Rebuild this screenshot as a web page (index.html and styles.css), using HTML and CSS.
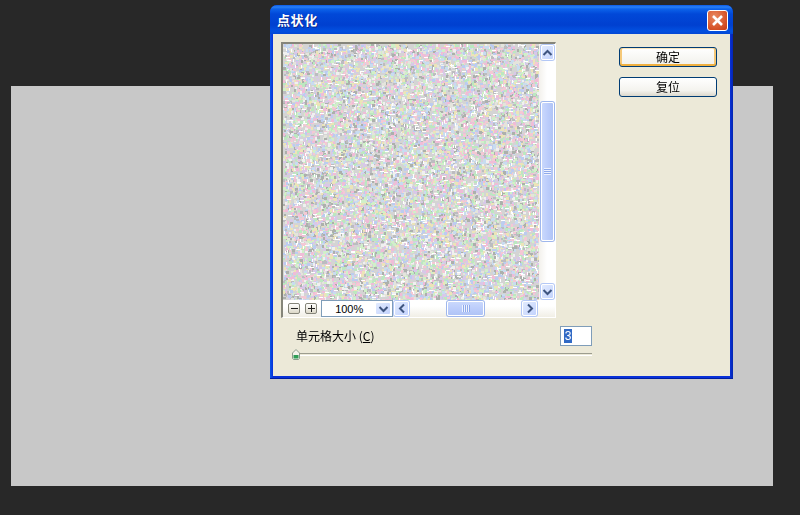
FILE: index.html
```html
<!DOCTYPE html>
<html lang="zh-CN">
<head>
    <meta charset="UTF-8">
    <title>点状化</title>
    <link rel="stylesheet" href="styles.css">
</head>
<body>

    <div class="workspace">
        <div class="doc-canvas"></div>
    </div>

    <div class="dialog">
        <div class="titlebar">
            <span class="title-text">点状化</span>
            <button class="close-btn">
                <svg width="13" height="13" viewBox="0 0 13 13"><path d="M2 2l9 9M11 2l-9 9" stroke="#fff" stroke-width="2.6" fill="none"/></svg>
            </button>
        </div>

        <div class="client">
            <div class="left-col">
                <div class="preview-frame">
                    <canvas id="noise" width="256" height="256"></canvas>

                    <div class="vbar">
                        <div class="sb-btn vbtn">
                            <svg width="11" height="8" viewBox="0 0 11 8"><path d="M1.500 6l4-4 4 4" class="chev"/></svg>
                        </div>
                        <div class="vthumb">
                            <div class="grip-h"></div>
                        </div>
                        <div class="sb-btn vbtn vbtn-down">
                            <svg width="11" height="8" viewBox="0 0 11 8"><path d="M1.500 2l4 4 4-4" class="chev"/></svg>
                        </div>
                    </div>

                    <div class="preview-tools">
                        <div class="zoom-btn">
                            <svg width="7" height="7" viewBox="0 0 7 7"><path d="M0 3.500h7" class="sign"/></svg>
                        </div>
                        <div class="zoom-btn">
                            <svg width="7" height="7" viewBox="0 0 7 7"><path d="M0 3.500h7M3.500 0v7" class="sign"/></svg>
                        </div>
                        <div class="zoom-select">
                            <span class="zoom-value">100%</span>
                            <div class="sb-btn drop-btn">
                                <svg width="11" height="8" viewBox="0 0 11 8"><path d="M1.500 2l4 4 4-4" class="chev"/></svg>
                            </div>
                        </div>
                        <div class="hbar">
                            <div class="sb-btn hbtn">
                                <svg width="8" height="11" viewBox="0 0 8 11"><path d="M6 1.500l-4 4 4 4" class="chev"/></svg>
                            </div>
                            <div class="hthumb">
                                <div class="grip-v"></div>
                            </div>
                            <div class="sb-btn hbtn">
                                <svg width="8" height="11" viewBox="0 0 8 11"><path d="M2 1.500l4 4-4 4" class="chev"/></svg>
                            </div>
                        </div>
                    </div>
                </div>

                <div class="param-row">
                    <span class="param-label">单元格大小 (<u>C</u>)</span>
                    <div class="param-input"><span class="selected">3</span></div>
                </div>
                <div class="slider">
                    <svg class="slider-thumb" width="8" height="11" viewBox="0 0 8 11">
                        <path d="M4 .5L7.500 4v5.500l-1 1h-5l-1-1V4z" fill="#f4f3ec" stroke="#8b9a8c"/>
                        <path d="M1.500 6h5v3.500h-5z" fill="#2f9e57"/>
                    </svg>
                </div>
            </div>

            <div class="right-col">
                <button class="xp-btn default">确定</button>
                <button class="xp-btn">复位</button>
            </div>
        </div>
    </div>

    <script src="noise.js"></script>
</body>
</html>
```

FILE: styles.css
```css
/* Basic reset */
* {
    box-sizing: border-box;
    margin: 0;
    padding: 0;
}

html, body {
    height: 100%;
    overflow: hidden;
}

body {
    font-family: "Noto Sans CJK SC", "Liberation Sans", sans-serif;
    font-size: 12px;
    color: #000;
    background-color: #282828;
}

/* Photoshop workspace behind the dialog */
.workspace {
    padding: 86px 27px 29px 11px;
    height: 100%;
}

.doc-canvas {
    height: 400px;
    background-color: #c8c8c8;
}

/* Dialog window */
.dialog {
    position: absolute;
    left: 270px;
    top: 5px;
    width: 463px;
    height: 374px;
    display: flex;
    flex-direction: column;
    padding: 0 3px 3px 3px;
    border-radius: 7px 7px 0 0;
    background: linear-gradient(90deg, #0a56e8 0, #0831d9 3px, #0831d9 460px, #0425b0 463px);
    box-shadow: inset 0 -1px 0 #001ea0;
}

.titlebar {
    height: 29px;
    margin: 0 -3px;
    padding: 0 6px 0 7px;
    display: flex;
    align-items: center;
    justify-content: space-between;
    border-radius: 7px 7px 0 0;
    background: linear-gradient(180deg, #0a5ae6 0, #2a80f4 2px, #0c62ea 4px, #0148d8 9px, #0040d0 20px, #0250e0 26px, #0348d4 29px);
}

.title-text {
    color: #fff;
    font-size: 13px;
    font-weight: 700;
    line-height: 30px;
    text-shadow: 1px 1px 0 #0a2a90;
    letter-spacing: 0.6px;
}

.close-btn {
    width: 21px;
    height: 21px;
    margin-right: -1px;
    margin-top: 1px;
    display: flex;
    align-items: center;
    justify-content: center;
    border: 1px solid #fff;
    border-radius: 3px;
    background: radial-gradient(circle at 35% 30%, #e88a62, #d8572c 60%, #c43a14);
}

.client {
    flex: 1;
    display: flex;
    padding: 8px 0 0 8px;
    background-color: #ece9d8;
}

.left-col {
    width: 275px;
}

/* Preview box */
.preview-frame {
    width: 275px;
    height: 276px;
    display: grid;
    grid-template-columns: 256px 16px;
    grid-template-rows: 256px 17px;
    border-style: solid;
    border-width: 2px 1px 1px 2px;
    border-color: #85857a #fff #fff #85857a;
    background: linear-gradient(180deg, #fff 0, #fff 262px, #f1efe6 273px);
}

#noise {
    display: block;
}

/* XP blue scrollbars */
.sb-btn {
    display: flex;
    align-items: center;
    justify-content: center;
    border: 1px solid #fff;
    border-radius: 2px;
    background: linear-gradient(135deg, #e1eafe, #c3d3fd);
    box-shadow: 0 0 0 1px #b4c8f6;
}

.chev {
    fill: none;
    stroke: #3f5580;
    stroke-width: 2;
}

.vbar {
    display: flex;
    flex-direction: column;
    padding: 1px 1px 1px 2px;
    background: linear-gradient(90deg, #f3f1ec, #fff 50%);
}

.vbtn {
    height: 15px;
    flex-shrink: 0;
}

.vbtn-down {
    margin-top: auto;
}

.vthumb {
    height: 139px;
    margin-top: 42px;
    display: flex;
    align-items: center;
    justify-content: center;
    border: 1px solid #fff;
    border-radius: 2px;
    background: linear-gradient(90deg, #c9d8fc, #bccdfb 50%, #b0c4f6);
    box-shadow: 0 0 0 1px #9fb7ec;
}

.grip-h {
    width: 7px;
    height: 7px;
    background: repeating-linear-gradient(180deg, #eef2fe 0 1px, #8faaeb 1px 2px);
}

.preview-tools {
    grid-column: 1;
    display: flex;
    align-items: flex-start;
    padding-left: 5px;
}

.zoom-btn {
    width: 12px;
    height: 11px;
    margin-top: 3px;
    margin-right: 5px;
    display: flex;
    align-items: center;
    justify-content: center;
    border: 1px solid #85857a;
    border-radius: 2px;
    background: linear-gradient(180deg, #fff, #dcd8c8);
}

.zoom-btn + .zoom-btn {
    margin-right: 4px;
}

.sign {
    fill: none;
    stroke: #222;
    stroke-width: 1;
}

.zoom-select {
    width: 72px;
    height: 17px;
    display: flex;
    justify-content: space-between;
    margin-right: 1px;
    padding: 1px;
    border: 1px solid #7f9db9;
    background-color: #fff;
}

.zoom-value {
    width: 54px;
    text-align: center;
    line-height: 14px;
    font-family: "Liberation Sans", sans-serif;
    font-size: 11px;
}

.drop-btn {
    width: 16px;
    height: 13px;
    box-shadow: none;
}

.hbar {
    flex: 1;
    display: flex;
    padding-top: 1px;
    margin-right: 1px;
}

.hbtn {
    width: 15px;
    height: 15px;
}

.hthumb {
    width: 37px;
    height: 15px;
    margin-left: 38px;
    margin-right: 38px;
    display: flex;
    align-items: center;
    justify-content: center;
    border: 1px solid #fff;
    border-radius: 2px;
    background: linear-gradient(180deg, #c9d8fc, #bccdfb 50%, #b0c4f6);
    box-shadow: 0 0 0 1px #9fb7ec;
}

.grip-v {
    width: 8px;
    height: 7px;
    background: repeating-linear-gradient(90deg, #eef2fe 0 1px, #8faaeb 1px 2px);
}

/* Cell size parameter */
.param-row {
    width: 311px;
    height: 20px;
    margin-top: 8px;
    display: flex;
    align-items: center;
    justify-content: space-between;
    padding-left: 15px;
}

.param-label {
    font-size: 12px;
    line-height: 20px;
}

.param-input {
    width: 32px;
    height: 20px;
    padding: 2px 3px;
    border: 1px solid #7f9db9;
    background-color: #fff;
}

.selected {
    display: block;
    width: 8px;
    height: 14px;
    font-family: "Liberation Sans", sans-serif;
    font-size: 12px;
    line-height: 14px;
    text-align: center;
    color: #fff;
    background-color: #316ac5;
}

.slider {
    position: relative;
    width: 296px;
    height: 3px;
    margin: 7px 0 0 15px;
    border-top: 1px solid #9d9d8f;
    border-bottom: 1px solid #fff;
}

.slider-thumb {
    position: absolute;
    left: -4px;
    top: -5px;
}

/* Right hand buttons */
.right-col {
    margin-left: 63px;
    padding-top: 5px;
    display: flex;
    flex-direction: column;
    gap: 10px;
}

.xp-btn {
    width: 98px;
    height: 20px;
    font-family: inherit;
    font-size: 12px;
    line-height: 16px;
    border: 1px solid #003c74;
    border-radius: 3px;
    background: linear-gradient(180deg, #fff, #f4f3ee 70%, #dcd8cc);
}

.xp-btn.default {
    box-shadow: inset 0 -2px 0 #f0b040, inset 2px 0 0 #f5c878, inset -2px 0 0 #f5c878, inset 0 1px 0 #fbe6bc;
    background: linear-gradient(180deg, #fff, #f1f0ea);
}
```

FILE: noise.js
```js
// Preview of the filter: soft pastel cells, about 2-3px each
const noiseCanvas = document.getElementById('noise');
const ctx = noiseCanvas.getContext('2d');

const palette = ['#f0bcd8', '#bce8c0', '#bcccf0', '#d8c8e8', '#d0f0c8', '#f4c8d4', '#bcbcc0', '#acb0ac', '#f0f0f0', '#e4e4dc', '#c8dcf0', '#ece4b8'];

// small seeded generator so every render is the same
let seed = 12345;
function rnd() {
    seed = (seed * 1664525 + 1013904223) >>> 0;
    return seed / 4294967296;
}

ctx.fillStyle = '#d4d4d4';
ctx.fillRect(0, 0, 256, 256);

for (let i = 0; i < 16000; i++) {
    const x = Math.floor(rnd() * 256);
    const y = Math.floor(rnd() * 256);
    ctx.fillStyle = palette[Math.floor(rnd() * palette.length)];
    ctx.fillRect(x, y, 2 + Math.floor(rnd() * 2), 2 + Math.floor(rnd() * 2));
}

// a few pure white streaks
ctx.fillStyle = '#ffffff';
for (let i = 0; i < 700; i++) {
    const x = Math.floor(rnd() * 256);
    const y = Math.floor(rnd() * 256);
    if (rnd() < 0.5) {
        ctx.fillRect(x, y, 4, 1);
    } else {
        ctx.fillRect(x, y, 1, 3);
    }
}
```
